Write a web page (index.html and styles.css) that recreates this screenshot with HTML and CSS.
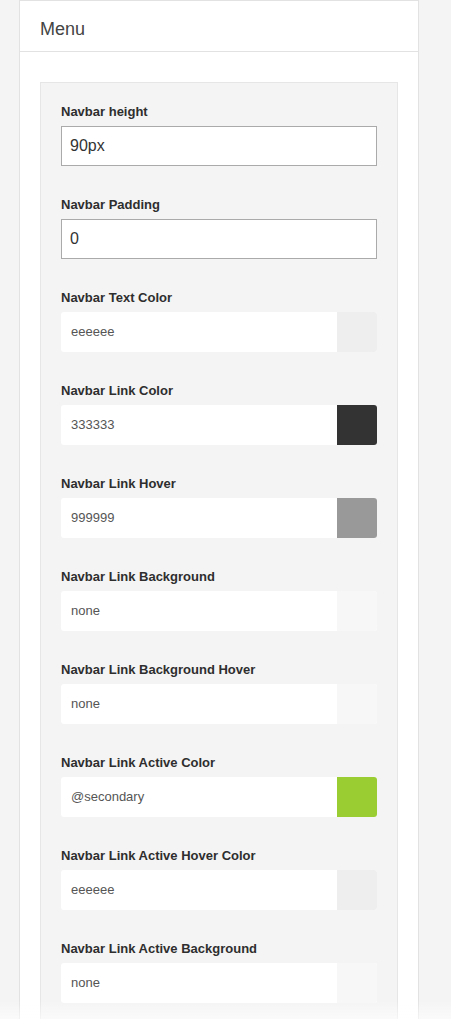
FILE: index.html
```html
<!DOCTYPE html>
<html>
 <head>
  <meta charset="utf-8">
  <link rel="stylesheet" href="styles.css">
 </head>
 <body>
 <div class="card">
  <div class="card-head">Menu</div>
  <div class="card-body">
   <div class="panel">
    <div class="field">
     <label>Navbar height</label>
     <div class="text-input">90px</div>
    </div>
    <div class="field">
     <label>Navbar Padding</label>
     <div class="text-input">0</div>
    </div>
    <div class="field">
     <label>Navbar Text Color</label>
     <div class="color-input"><span class="val">eeeeee</span><span class="swatch" style="background:#eeeeee"></span></div>
    </div>
    <div class="field">
     <label>Navbar Link Color</label>
     <div class="color-input"><span class="val">333333</span><span class="swatch" style="background:#333333"></span></div>
    </div>
    <div class="field">
     <label>Navbar Link Hover</label>
     <div class="color-input"><span class="val">999999</span><span class="swatch" style="background:#999999"></span></div>
    </div>
    <div class="field">
     <label>Navbar Link Background</label>
     <div class="color-input"><span class="val">none</span><span class="swatch swatch-none"></span></div>
    </div>
    <div class="field">
     <label>Navbar Link Background Hover</label>
     <div class="color-input"><span class="val">none</span><span class="swatch swatch-none"></span></div>
    </div>
    <div class="field">
     <label>Navbar Link Active Color</label>
     <div class="color-input"><span class="val">@secondary</span><span class="swatch" style="background:#9acd32"></span></div>
    </div>
    <div class="field">
     <label>Navbar Link Active Hover Color</label>
     <div class="color-input"><span class="val">eeeeee</span><span class="swatch" style="background:#eeeeee"></span></div>
    </div>
    <div class="field">
     <label>Navbar Link Active Background</label>
     <div class="color-input"><span class="val">none</span><span class="swatch swatch-none"></span></div>
    </div>
   </div>
  </div>
 </div>
 <div class="fade"></div>
 </body>
</html>
```

FILE: styles.css
```css
* { margin: 0; padding: 0; box-sizing: border-box; }
html, body { height: 100%; overflow: hidden; }
body { background: #f4f4f4; font-family: "Liberation Sans", Arial, sans-serif; color: #333; }
.card { width: 400px; margin-left: 19px; background: #fff; border: 1px solid #e2e2e2; }
.card-head { height: 51px; padding: 18px 0 0 20px; font-size: 18px; color: #444; border-bottom: 1px solid #e2e2e2; }
.card-body { padding: 30px 20px 0 20px; }
.panel { background: #f4f4f4; border: 1px solid #e6e6e6; padding: 20px 20px 60px 20px; }
.field { margin-bottom: 30px; }
.field label { display: block; height: 18px; line-height: 18px; font-size: 13px; font-weight: bold; color: #2e2e2e; margin-bottom: 5px; }
.text-input { height: 40px; background: #fff; border: 1px solid #aaa; padding: 0 8px; line-height: 38px; font-size: 16px; color: #333; }
.color-input { display: flex; height: 40px; background: #fff; border-radius: 3px; overflow: hidden; }
.color-input .val { flex: 1; padding-left: 10px; line-height: 40px; font-size: 13px; color: #555; }
.color-input .swatch { width: 40px; }
.swatch-none { background: #f7f7f7; }
.fade { position: fixed; left: 0; right: 0; bottom: 0; height: 20px; background: linear-gradient(rgba(255,255,255,0), rgba(255,255,255,0.6)); }
```
